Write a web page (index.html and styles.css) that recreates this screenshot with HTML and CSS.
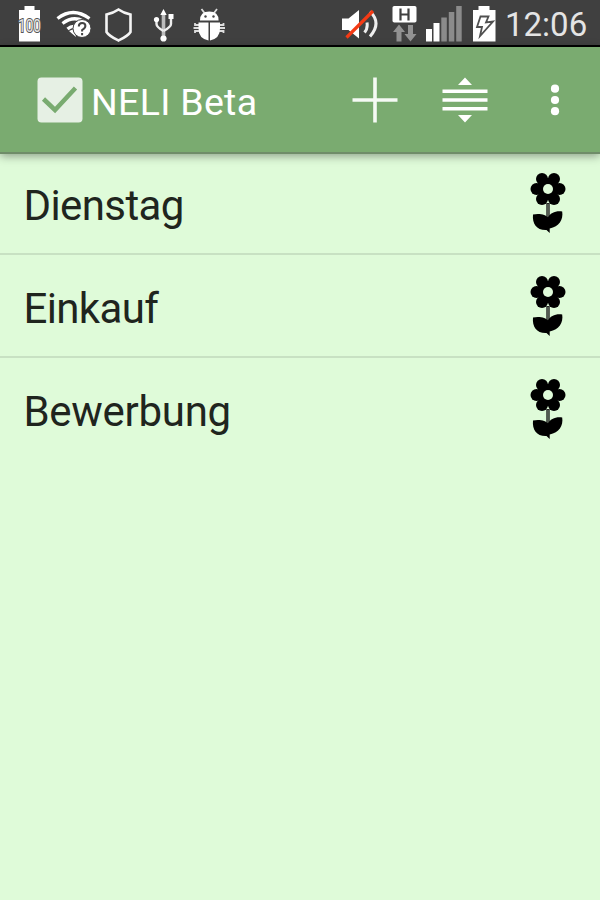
FILE: index.html
```html
<!DOCTYPE html>
<html lang="de">
<head>
<meta charset="utf-8">
<title>NELI Beta</title>
<link rel="stylesheet" href="styles.css">
</head>
<body>
<svg class="defs" width="0" height="0" aria-hidden="true">
  <symbol id="flower" viewBox="0 0 40 64">
    <circle cx="14" cy="8" r="6"/><circle cx="26" cy="8" r="6"/>
    <circle cx="8.500" cy="18" r="6"/><circle cx="31.500" cy="18" r="6"/>
    <circle cx="14" cy="28" r="6"/><circle cx="26" cy="28" r="6"/>
    <circle cx="20" cy="18" r="11"/>
    <circle cx="20" cy="18" r="5" fill="#dffbd9"/>
    <path d="M20 32V47" stroke="#222" stroke-width="3.400"/>
    <path d="M20 33V46" stroke="#82927e" stroke-width="1"/>
    <path d="M5 43.500C12 42 18 44 20 46.500C22 42 28 39.500 34.200 40.500C35.500 49 31 55.500 21.700 57.500V62L18.500 59C9 59.500 4 53 5 43.500Z"/>
  </symbol>
</svg>

<header class="status">
  <div class="status-left">
    <svg class="level" width="28" height="45" viewBox="16 0 28 45"><path d="M24.500 6h10v4H40v31.500H19V10h5.500z" fill="#fff"/><text class="charge-level" x="18" y="31.500" textLength="23" lengthAdjust="spacingAndGlyphs">100</text></svg>
    <svg class="wifi" width="36" height="45" viewBox="56 0 36 45"><g fill="none" stroke="#fff" stroke-width="3.300"><path d="M57.500 18.500Q73 6.500 89.500 18.500M62.500 23.500Q73 15.500 83 21M67.500 29Q71 26 75 26.500"/></g><path d="M69 31l5-2 2 8z" fill="#fff"/><circle cx="82" cy="28.500" r="9" fill="#fff" stroke="#404040"/><path d="M78.800 26.500q0-3.500 3.300-3.500t3.300 3q0 2-3.300 4v1.500M82.100 33v2.200" fill="none" stroke="#444" stroke-width="2"/></svg>
    <svg class="shield" width="30" height="45" viewBox="104 0 30 45"><path d="M118.500 9.500C122 12 126 13.500 130.500 14.500V32C128 36 123.500 38 118.500 40.500C113.500 38 109 36 106.500 32V14.500C111 13.500 115 12 118.500 9.500Z" fill="none" stroke="#f4f4f4" stroke-width="2.600"/></svg>
    <svg class="usb" width="22" height="45" viewBox="153 0 22 45"><path d="M163.500 13V39" stroke="#bbb" stroke-width="3.600"/><g fill="none" stroke="#eee" stroke-width="2.400"><path d="M156.500 20v4q0 3 7 7M171 17v7q0 3-7.500 7"/></g><path d="M163.500 9l3.200 6h-6.400zM168.500 14h5v5h-5z" fill="#fff"/><circle cx="156.500" cy="19.500" r="2.600" fill="#fff"/><circle cx="163.500" cy="38.500" r="3.100" fill="#fff"/></svg>
    <svg class="bug" width="36" height="45" viewBox="192 0 36 45"><g fill="none" stroke="#ddd" stroke-width="1.800"><path d="M201.500 9l3 4M217 9l-3 4M200 25h-5v-2M199 28h-5.500M200 31h-5v2M218 25h5.500v-2M219 28h6M218 31h5.500v2"/></g><path d="M200 20.500q0-9 9.300-9t9.300 9zM198.500 22.500h10v18q-10-2-10-12zM210 22.500h10v6q0 10-10 12z" fill="#fff"/><circle cx="205.500" cy="16.500" r="1.200" fill="#444"/><circle cx="213.500" cy="16.500" r="1.200" fill="#444"/></svg>
  </div>
  <div class="status-right">
    <svg width="39" height="45" viewBox="340 0 39 45"><path d="M342 18.500h6.500l10.500-8.500v28.500l-10.500-8.500H342z" fill="#fff"/><g fill="none" stroke="#eee" stroke-width="3"><path d="M364.500 32.500q3.500-4 2.500-10M370 11.500q12 11.500 0 25"/></g><path d="M346.500 37.500L373 11" stroke="#f43a14" stroke-width="3.200"/></svg>
    <svg class="data" width="27" height="45" viewBox="391 0 27 45"><rect x="392.500" y="6" width="24" height="16.500" rx="1.800" fill="#fff"/><path d="M400.500 8.500v12M408.500 8.500v12M400.500 14.500h8" stroke="#404040" stroke-width="2.200"/><path d="M399 24.500l6 7.500h-3.500v9.500h-5V32H393zM410.500 41.500l-6-7.500h3.500v-9h5v9h3.500z" fill="#929292"/></svg>
    <svg class="signal" width="38" height="45" viewBox="425 0 38 45"><path d="M426 29h6v12.500h-6zM433.500 23h6v18.500h-6z" fill="#fff"/><path d="M441.300 17.500h5.500v24h-5.500zM448.800 12h5.500v29.500h-5.500zM456.200 6h5.500v35.500h-5.500z" fill="#8b8b8b"/></svg>
    <svg class="charge" width="25" height="45" viewBox="472 0 25 45"><path d="M478.500 6h11v4h6v31.500h-22.500V10h5.500z" fill="#fff"/><path d="M480.500 16.500h8l-2.500 6 7-1-13 14.500 2-9h-5z" fill="#fff" stroke="#505050" stroke-width="1.800"/></svg>
    <span class="clock">12:06</span>
  </div>
</header>

<nav class="appbar">
  <svg class="logo" width="46" height="46" viewBox="0 0 46 46"><rect x=".5" y=".5" width="45" height="45" rx="4" fill="#e6f0e4"/><path d="M6.500 22L18 33L38.500 11" fill="none" stroke="#79ab70" stroke-width="4.500"/></svg>
  <h1 class="title">NELI Beta</h1>
  <div class="actions">
    <svg width="46" height="46" viewBox="0 0 46 46"><path d="M23 .5v45M.5 23h45" stroke="#f5faf4" stroke-width="3.600"/></svg>
    <svg width="46" height="46" viewBox="0 0 46 46"><path d="M.5 14.200h45M.5 23h45M.5 31.700h45" stroke="#fff" stroke-width="3.600"/><path d="M23 .5l7 7.500H16zM23 45.500l7-7.500H16z" fill="#fff"/></svg>
    <svg width="46" height="46" viewBox="0 0 46 46" fill="#fff"><circle cx="23" cy="11.700" r="4.100"/><circle cx="23" cy="23" r="4.100"/><circle cx="23" cy="34.200" r="4.100"/></svg>
  </div>
</nav>

<main class="list">
  <div class="row"><span>Dienstag</span><svg class="flower"><use href="#flower"/></svg></div>
  <div class="row"><span class="tight">Einkauf</span><svg class="flower"><use href="#flower"/></svg></div>
  <div class="row"><span class="loose">Bewerbung</span><svg class="flower"><use href="#flower"/></svg></div>
</main>
</body>
</html>
```

FILE: styles.css
```css
* {
  box-sizing: border-box;
}

body {
  margin: 0;
  height: 900px;
  overflow: hidden;
  background: #dffbd9;
  font-family: Roboto, "Liberation Sans", sans-serif;
}

svg {
  display: block;
  flex: none;
}

.defs {
  position: absolute;
}

.status {
  display: flex;
  justify-content: space-between;
  height: 47px;
  padding: 0 13px 0 16px;
  background: #404040;
  border-bottom: 2px solid #000;
}

.status-left,
.status-right {
  display: flex;
}

.level {
  overflow: visible;
}

.charge-level {
  fill: #e8e8e8;
  stroke: #555;
  stroke-width: 2px;
  paint-order: stroke;
  font-size: 18px;
}

.wifi,
.shield,
.data {
  margin-left: 12px;
}

.usb {
  margin-left: 19px;
}

.bug {
  margin-left: 17px;
}

.signal {
  margin-left: 7px;
}

.charge {
  margin-left: 9px;
}

.clock {
  width: 82px;
  margin-left: 8px;
  color: #e4e4e4;
  font-size: 33px;
  line-height: 50px;
  white-space: nowrap;
}

.appbar {
  position: relative;
  display: flex;
  align-items: center;
  height: 107px;
  padding: 0 22px 0 37px;
  background: #7aab70;
  border-bottom: 2px solid #6f8c69;
  box-shadow: 0 2px 9px rgba(0, 0, 0, 0.38);
}

.title {
  margin: 0 0 0 8px;
  padding-top: 4px;
  color: #fff;
  font-size: 37.5px;
  font-weight: 400;
  line-height: 46px;
  letter-spacing: 0.3px;
}

.actions {
  display: flex;
  gap: 44px;
  margin-left: auto;
}

.list {
  margin-top: -2px;
}

.row {
  display: flex;
  align-items: center;
  justify-content: space-between;
  height: 103px;
  padding: 5px 32px 0 23.5px;
  border-bottom: 2px solid #c8e1c3;
  color: #1f251e;
  font-size: 42px;
  letter-spacing: -0.6px;
}

.tight {
  letter-spacing: -0.65px;
}

.loose {
  letter-spacing: -0.3px;
}

.row:last-child {
  border-bottom-color: transparent;
}

.flower {
  width: 40px;
  height: 64px;
  margin-top: -5px;
}
```
